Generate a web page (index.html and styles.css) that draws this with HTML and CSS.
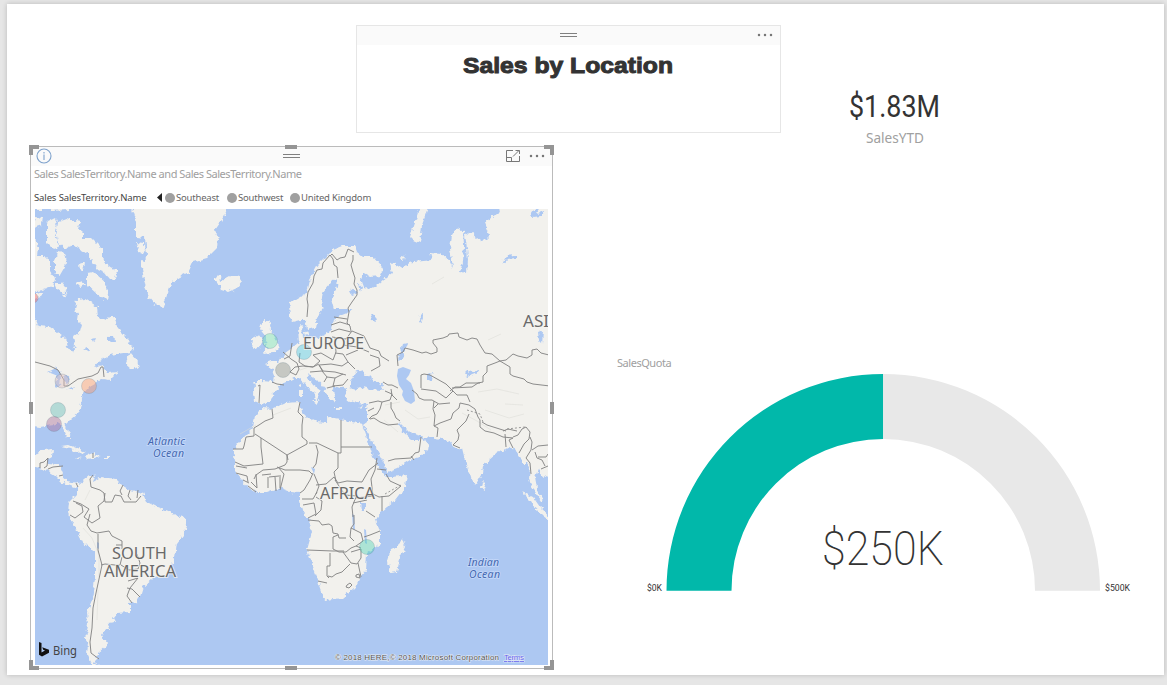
FILE: index.html
```html
<!DOCTYPE html>
<html lang="en">
<head>
<meta charset="utf-8">
<title>Sales by Location</title>
<link rel="stylesheet" href="styles.css">
</head>
<body>
<main class="sheet">
  <div class="col-left">
    <section class="textbox">
      <header class="bar">
        <svg class="grip" width="17" height="6" viewBox="0 0 17 6"><path d="M0 1.5h17M0 4.5h17"/></svg>
        <svg class="dots" width="16" height="4" viewBox="0 0 16 4"><circle cx="2" cy="2" r="1.25"/><circle cx="8" cy="2" r="1.25"/><circle cx="14" cy="2" r="1.25"/></svg>
      </header>
      <svg class="heading" width="423" height="40" viewBox="0 0 423 40"><text x="106" y="28" textLength="210" lengthAdjust="spacingAndGlyphs">Sales by Location</text></svg>
    </section>

    <section class="mapbox">
      <i class="h tl"></i><i class="h tm"></i><i class="h tr"></i><i class="h ml"></i><i class="h mr"></i><i class="h bl"></i><i class="h bm"></i><i class="h br"></i>
      <header class="bar">
        <svg class="info" width="16" height="16" viewBox="0 0 16 16"><circle cx="8" cy="8" r="7"/><path d="M8 6.5v5.5M8 4v1.4"/></svg>
        <svg class="grip" width="17" height="6" viewBox="0 0 17 6"><path d="M0 1.5h17M0 4.5h17"/></svg>
        <svg class="focus" width="16" height="14" viewBox="0 0 16 14"><path d="M8 1.5H1.500V12.500H14.500V7M1.500 8.500H6.500V12.500M8 7.500L14 1.500M10.500 1.500H14.500V5"/></svg>
        <svg class="dots" width="16" height="4" viewBox="0 0 16 4"><circle cx="2" cy="2" r="1.25"/><circle cx="8" cy="2" r="1.25"/><circle cx="14" cy="2" r="1.25"/></svg>
      </header>
      <h2 class="viz-title">Sales SalesTerritory.Name and Sales SalesTerritory.Name</h2>
      <div class="legend">
        <span class="legend-name">Sales SalesTerritory.Name</span>
        <svg class="prev" width="5" height="9" viewBox="0 0 5 9"><path d="M5 0v9L0 4.500z"/></svg>
        <span class="key k1"><b></b>Southeast</span>
        <span class="key k2"><b></b>Southwest</span>
        <span class="key k3"><b></b>United Kingdom</span>
      </div>
      <svg class="map" width="513" height="456" viewBox="35 209 513 456">
        <defs>
          <filter id="coast" filterUnits="userSpaceOnUse" x="20" y="195" width="545" height="485" color-interpolation-filters="sRGB">
            <feTurbulence type="fractalNoise" baseFrequency=".22" numOctaves="2" seed="4" result="n"/>
            <feDisplacementMap in="SourceGraphic" in2="n" scale="6" xChannelSelector="R" yChannelSelector="G"/>
          </filter>
        </defs>
        <rect class="sea" x="35" y="209" width="514" height="456"/>
        <g filter="url(#coast)">
          <g class="land">
            <path d="M131 200L132 209 136 222 136 237 145 238 147 255 142 268 145 285 148 297 153 303 163 307 167 295 172 282 180 277 188 273 193 262 207 258 217 248 218 238 215 230 220 223 226 212 228 200z"/>
            <path d="M136 243l8 1 1 7-5 3zM141 260l5 2-1 7-4-3z"/>
            <path d="M215 277l5-2 1 6 9-5h8l4 6-5 6-9 4-7-2-1-5-5-3z"/>
            <path d="M58 222l9-3 13 3-2 6 5 4v6h9l10 10v7l3 8 12 9-2 6-5 1-5-6-7-3-6-8-4-7-8-5-7-5-8 3-7-6-2-10z"/>
            <path d="M87 273l6-1 14 13 1 8-1 7-10-6-10-9zM47 222l8-4 2 5-2 9 2 10 3 5-7 1-6-6zM35 217l8 1-1 7-9 3zM50 200h20v10l-20 1zM30 200h14v10H30z"/>
            <path d="M57 252l8 1 2 10-7 12-5-3v-10zM30 238h5l3 10-1 9h8l5 3v10l5 8-2 9-10 3-13 2zM55 283h7l5 7-4 3-6-5zM79 264l6-2-1 6-4 2zM76 283l7-2 3 4-6 2zM62 295l4-2 1 4-4 1zM34 294l9-1-1 4-8 2z"/>
            <path d="M28 318H35L38 326 50 327 65 338 68 347 73 353 75 345 73 337 80 332 82 325 77 320 78 313 75 308 77 300 85 299 90 302 97 307 98 318 107 320 110 315 115 318 117 328 127 338 133 348 130 352 110 355 100 361 95 367 102 364 107 373 118 372 110 380 102 379 95 384 88 388 83 394 81 404 79 412 70 420 65 425 69 432 71 438 67 438 63 428 60 422 53 425 46 426 40 427 28 425z"/>
            <path d="M125 363l5-11 7 8 2 7-7 2z"/>
            <path d="M28 460l15-10 10-1-1 8-5 3 1 4 12 1 3 7-1 5 5 4 11 2-1 5-14-5-8-8-8-5-19-5zM61 446l7-1 17 7-8 1-7-5zM85 456l8-3 8 4-14 2zM104 457h4v2h-4zM76 457l5 1-4 1z"/>
            <path d="M78 485L90 475 95 476 93 482 100 478 117 480 123 486 130 490 143 493 147 502 157 507 170 512 185 518 187 525 183 535 177 543 175 558 170 570 165 577 153 578 143 587 140 597 137 602 130 603 130 612 117 613 113 618 115 622 108 623 110 630 105 630 102 635 107 645 98 653 98 657 93 662 102 668 92 665 87 655 88 642 85 638 88 625 87 612 92 600 95 578 95 552 83 543 78 533 70 517 68 512 69 502 78 493z"/>
            <path d="M290 318L289 305 295 300 307 293 310 280 318 265 328 255 333 250 343 246 355 246 357 252 363 257 373 257 380 265 383 270 380 276 370 277 363 273 361 279 364 287 371 288 376 286 383 280 392 273 390 263 395 262 397 268 413 262 432 260 430 252 440 253 450 262 453 268 450 248 452 235 457 227 463 230 464 245 463 262 460 272 467 273 468 260 467 248 465 235 470 232 477 238 483 242 490 235 485 222 500 212 498 200H560V482L547 477 540 475 539 467 535 477 537 488 543 501 541 501 533 490 529 478 530 467 527 463 522 463 520 457 515 450 510 447 503 450 495 455 483 465 482 475 476 485 470 477 465 460 462 448 455 449 448 440 435 438 425 437 417 435 410 433 402 425 399 422 403 432 412 440 420 440 422 438 429 443 428 450 420 457 410 460 397 468 387 472 385 465 377 450 370 437 363 425 367 422 367 410 368 404 357 403 347 400 345 395 347 389 338 386 333 389 335 403 330 400 327 392 323 387 317 380 310 375 307 372 308 378 313 385 321 391 319 395 316 402 315 394 308 388 303 382 298 378 294 378 288 381 280 385 275 393 268 402 262 404 258 402 254 401 253 393 255 385 254 381 262 381 273 382 274 375 272 369 265 364 270 362 277 362 285 353 292 348 299 342 298 328 302 325 303 337 310 338 320 337 330 332 332 325 337 317 347 313 353 309 345 309 335 309 332 298 337 287 338 278 332 280 323 292 321 302 323 310 317 318 315 328 308 330 306 320 300 320 292 322z"/>
            <path d="M263 320l7 2-1 5 3 5 6 11 2 5-8 5-9 1 5-6-3-5 2-6-7-9zM252 338l6-3 4 5-3 7-8 2zM304 332l4-1 1 4-4 1z"/>
            <path d="M262 408L272 409 285 403 300 402 302 412 308 418 317 422 327 423 328 417 340 419 353 422 362 424 367 438 373 457 379 467 386 477 392 477 407 475 405 487 395 500 380 513 376 520 380 532 380 543 367 553 366 570 360 577 355 588 343 598 325 600 322 592 315 572 307 550 312 532 308 518 302 510 300 502 300 493 290 492 280 488 267 493 257 493 248 487 235 472 235 463 233 450 243 438 253 428 255 415z"/>
            <path d="M402 538l3 9-5 11-3 14-7 1-2-11 2-12 7-3zM522 492l11 5 7 10 15 14v4l-17-13-7-11zM482 481l3 3-1 6-3-2zM422 200h9l-9 25-2 18-7-3-3-3 5-15zM312 400h7l-2 4zM299 390h3v7h-3zM299 384l2-1v5l-2-1zM336 407h7v2h-7zM358 407l5-2-3 4zM402 255l3 1-1 4-4-2z"/>
          </g>
          <g class="lake">
            <path d="M350 388v-8l6-8 7-2 3 6 6-2-2 5 13 6-2 5-11-1-8-2-6 3z"/>
            <path d="M427 374l6-1-2 7-4 1zM465 374l5-5 2 3 8-2v2l-13 5zM538 332l5-2-1 14-3-3z"/>
            <path d="M48 372l8-4 6 5-4 3zM56 377l4-2-1 13-4-1zM63 375l6 1 1 7-5 1zM67 389l8-3-3 4z"/>
            <path d="M360 503h6v7h-5zM350 291l4-3 3 5-5 2zM358 283l4 3-2 7zM370 315l5 1 2 5-5-1zM334 262l4 8M398 360l5-16 4-1-5 16zM419 322l3-9 2 1-3 9zM502 265l4-9 10-1v3l-9 1zM530 212l10-4-3 5 8-2-4 5-9 1zM108 337l6-1 1 5-7 1zM92 339l4-1-2 5zM84 349l4-2 1 5z"/>
          </g>
        </g>
        <path class="lake" d="M398 369l5-2 8 3-2 5-3 4 5 4 3 8 1 10-4 3-6-3-3-6 1-4-4-6-2-9zM311 467l4 2-1 5zM352 514l2 1 1 15-2-1zM364 529l2 1 1 14-2-1zM97 542l2 1v6l-2-1z"/>
        <g class="relief"><path d="M83 528l9 10 7 17v22M405 410l13 9 12-2M462 413l15 8 14 9M478 392l19-3 22 5M505 404l18 1M240 434l16-9M273 415l18-7M384 420l14 12M85 500l5-10M432 284l12-7M300 370l9-3M98 590l-1 30M485 410l24 8 15-4M385 405l15-3M488 340l13-6"/></g>
        <g class="border">
          <path d="M307 317l1-12-1-6 1-7 5-9 1-7 3-6 5-1 1-6 7-8 3 4 1 6 3 2 1 11M330 256l2-2 5 6 3-2 5-1 3-8 6 3M353 255v5l-2 5 2 7 2 6-1 6 3 6v5l-5 7-4 6 1 4-2 11 3 3 1 5M334 317l13 2M331 325l9-3 10 3M331 332l8-3 12 3M352 331l-6 8-14-2M352 331l12 5 6 12 9 3 2 5 8 5M343 345l14 2 12 5M335 338l1 14-3 8M333 360l-12-7-8 2 7 6-7 6-8-1-6-4 1-9M292 343l-2 13-6 3M283 352l8 7 6 4 2 6-3 6M296 375l-6-3 5-5 8-1 10 1 6-3M319 365l12-1 11 2 6-4-5-8-8-1M319 365l4 6 12 1 11 3M310 372l12-1 5 6-3 5M327 377l8 1 8-4M335 378l-2 8 10-1 5-6M323 372l-4-7M335 386l-8 2M348 362l7 7M346 355l12-5M258 386l2-1-1 18M272 382l5 2 7 1M370 355l9 3 1 8-9 5"/>
          <path d="M398 366l-1-11 6-3 2-4 8 2 9 3 4-1 5 2 6-2v-4l-4-5v-3l10-2 5-2 1-2 9-1 1 4 8 3 5-2 5 1 3 6 5 8 7 1 8 7 6-1 7-6 5 2 9 2 5-3v-5l5-1 4 4 8 2M500 361l10 6v7l3 2 11 3 3 3 6 2 17 2M500 361l-5 2-8 3v6l-4 4v6l-5 1-6 4-20 1M421 388v-13l3-1 6 1 16 9 4 4 3 3-7 7-10-7-15-2M412 390l5 4 2 4 5 2 8 0 7 4 11-1M434 408l4-4M434 401l-1 8 2 6-1 11 4 2-1 9M434 426l6-3 11-4 2-6 6-5 1-5 9 2M450 391l5-4 5 0 6-4 14 0M451 389l6 6 10 0 3 7M383 382l5 3 4 0 6 3M391 389l1 6 5 5M385 391l7 3M369 403l9-2 4 1 8-2 2-6M382 402l-2 7-3 5-5 2-3 3M391 402v6l3 5 2 5 4 3M370 419l4-1 6 4 8 3 10-1M388 461l7-2 16-1 4-5 4-1 2-15M368 411l6-3M411 456l3 4"/>
          <path d="M469 405l6 4 3 8 2 3v7l5 4 9 2 9 4 10 1M482 422l5 3 19 6M503 431l5-2 9 2M505 434l1 13M513 438l-4 2 4 8M513 437l5-2 4-6 4-2 4 5-1 7-5 5-5 9M530 437l2 5-1 8-5 8 4 5 1 11M532 450l6-4 10-1M535 452l2 6 5 2 3 6M538 457l8 0 2-3M541 469l7-3M469 414l-3 7-9 9 2 5-1 5-5 5 7 3"/>
          <path d="M272 409l1 9-8 3-6 4-5 3v8l-8 1-2 9-1 3-10 0M255 434l32 21 1 5M261 438l0 9 2 17-19 2-9-4M300 402l-2 10 5 5-1 8 0 12 5 4 0 3-20 11v7l-2 3-10 4-12 1-7 5-2 4M341 420v33M341 453h-3v15l-4 4 2 9M309 443l8 0 21 10M341 447h31M316 445l2 7-2 12-3 4M277 467l8 3 15 0 9 1 3 3M278 467l6 7-4 16M262 475l9-1M268 477v11M279 476l-10 1M275 477l1 14M280 475v13M256 474l1 14-6-6M236 473l11 3 1 6M236 466l11 2M243 480l6 3M248 486l8 6M313 473l-3 7-6 10-4 3M316 485l10-1 8-7 4 6 9-2 15 1 7-12 9-7M314 474l5 12-3 8M335 480l10 15 12 1M377 458l-2 12-4 9M377 469l9 1M371 479l2 17-17 2M386 474l4 7 11 5-12 10-10 1-6-3M382 496v15M356 497l-4 10 1 10M353 503l14-3M366 511l9 6M302 499l11 0 4-7M303 505l11-2 2 11-8 4M316 497l6 4-1 9-6 6M308 520l11 1 3 4 7-1 3 2 1 7 5 1 1 4 7 0M338 535l-5 2v12l6 3 7 0 5-4 5-2M307 550l26 1 11 0M330 553v13h-3v10l2 2M327 583l-9-2M328 576l4 1 4-3 6-2 8-8M343 552l8 11 6 1 4-6 0-9-10 3M354 515v9l-3 4 6 3 4 2 2 8M364 537l6-2 10-4M351 528l-1 9 4 4M358 563l3 14M363 541l-7 5 5 2M347 585l3-2 2 2-3 3-3-1zM356 575l3-1 1 4-4-1z"/>
          <path d="M93 475l-3 4 1 8 9 3 4 3 1 9 7 0 3-7 6 1 3 6 12 0 5-6M123 485l-3 6 2 4M130 490l-2 6 3 4M138 490l-1 8M105 493l-1 8-6 5 2 12-8 5-8-6 5-8-8-5-8-3M76 503l6 3 1 6-8 6-5-3M90 514l-3 11 4 6 6 2 12-2 3 5 10 5v8M98 534v16l4 15-3 14-3 14-3 15-1 20-2 14 1 11 8 6M101 565l4-1 10 1 5 0 2-8M122 545l-6 0M121 565l8 5 9-1 2-6-3-9M138 578l-10 3M138 578l-8 10-3 8 5 7M127 588l5 1 8 8M35 362l15 4 8 4 6 10v6l4 0 10-7 14-3 6-3 3-6 2 0 1 10M40 468v-5l4-1 4-4M48 458l-1 8-3 2M48 469l5-2 10-1M59 476l4-1M76 483l2 4M93 453v5"/>
        </g>
        <path class="dash" d="M385 494l16-9M507 429l18-2M467 410l13 4 3 8"/>
        <g class="pins">
          <circle cx="33" cy="298" r="5" fill="#fd625e"/>
          <circle cx="62" cy="381" r="7" fill="#dfbfbf"/>
          <circle cx="89" cy="386" r="7.500" fill="#fe9666"/>
          <circle cx="58" cy="410" r="7.500" fill="#5fb9b8"/>
          <circle cx="54" cy="424" r="7.500" fill="#a66999"/>
          <circle cx="270" cy="341" r="7.500" fill="#73e4b4"/>
          <circle cx="304" cy="352" r="7.500" fill="#4bc8e6"/>
          <circle cx="283" cy="370" r="7.500" fill="#8b908a"/>
          <circle cx="367" cy="547" r="7.500" fill="#4cd2b4"/>
        </g>
        <g class="place">
          <text x="303" y="349" textLength="61" lengthAdjust="spacingAndGlyphs">EUROPE</text>
          <text x="523" y="327" textLength="37" lengthAdjust="spacingAndGlyphs">ASIA</text>
          <text x="320" y="499" textLength="55" lengthAdjust="spacingAndGlyphs">AFRICA</text>
          <text x="112" y="559" textLength="55" lengthAdjust="spacingAndGlyphs">SOUTH</text>
          <text x="104" y="577" textLength="72" lengthAdjust="spacingAndGlyphs">AMERICA</text>
        </g>
        <g class="ocean">
          <text x="148" y="445" textLength="37">Atlantic</text><text x="153" y="457" textLength="31">Ocean</text>
          <text x="468" y="566" textLength="31">Indian</text><text x="469" y="578" textLength="31">Ocean</text>
        </g>
        <path class="bing" d="M39 642l2.500 1v9.500l3.500-2-1.800-.8-1-2.400 6.800 2.400v3L42 656.500 39 654.800z"/>
        <text class="bing-name" x="53" y="655" textLength="24" lengthAdjust="spacingAndGlyphs">Bing</text>
        <g class="credit"><text x="335" y="660" textLength="164">© 2018 HERE,© 2018 Microsoft Corporation</text><text class="terms" x="504" y="660" textLength="20">Terms</text></g>
      </svg>
    </section>
  </div>

  <div class="col-right">
    <section class="card">
      <svg width="160" height="38" viewBox="0 0 160 38"><text class="card-value" x="33" y="31" textLength="91" lengthAdjust="spacingAndGlyphs">$1.83M</text></svg>
      <svg width="160" height="24" viewBox="0 0 160 24"><text class="card-label" x="50" y="19" textLength="58" lengthAdjust="spacingAndGlyphs">SalesYTD</text></svg>
    </section>
    <section class="gauge">
      <h2 class="viz-title quota">SalesQuota</h2>
      <svg width="530" height="230" viewBox="610 370 530 230">
        <path fill="#01b8aa" d="M666.500 590.700A216.700 216.700 0 0 1 883.200 374V439A151.700 151.700 0 0 0 731.500 590.700z"/>
        <path fill="#e8e8e8" d="M883.200 374A216.700 216.700 0 0 1 1100 590.700H1035A151.700 151.700 0 0 0 883.200 439z"/>
        <text class="gauge-value" x="822" y="565" textLength="122" lengthAdjust="spacingAndGlyphs">$250K</text>
        <text class="tick" x="647" y="591" textLength="15" lengthAdjust="spacingAndGlyphs">$0K</text>
        <text class="tick" x="1105" y="591" textLength="25" lengthAdjust="spacingAndGlyphs">$500K</text>
      </svg>
    </section>
  </div>
</main>
</body>
</html>
```
FILE: styles.css
```css
* { box-sizing: border-box; }
body {
  margin: 0;
  height: 685px;
  padding: 4px 3px 10px 7px;
  overflow: hidden;
  background: #e6e6e6;
  font-family: "Noto Sans", "Open Sans", sans-serif;
}
svg { display: block; flex: none; }
.sheet {
  display: flex;
  height: 671px;
  background: #fff;
  box-shadow: 0 0 5px rgba(0, 0, 0, .2);
}
.col-left { width: 774px; padding: 21px 0 0 23px; }
.textbox { width: 425px; height: 108px; margin-left: auto; border: 1px solid #e6e6e6; }
.bar { display: flex; align-items: center; height: 19px; padding-bottom: 1px; background: #fafafa; }
.grip { fill: none; stroke: #808080; stroke-width: 1; }
.dots { fill: #777; }
.textbox .grip { margin-left: 203px; }
.textbox .dots { margin-left: auto; margin-right: 7px; }
.heading text {
  font: bold 22.500px "Liberation Sans", Arial, sans-serif;
  fill: #333;
  stroke: #333;
  stroke-width: 1;
}

.mapbox {
  position: relative;
  width: 523px;
  height: 523px;
  margin-top: 13px;
  border: 1px solid #bbb;
}
.mapbox .bar { padding-bottom: 2px; }
.h { position: absolute; width: 10px; height: 10px; border: 0 solid #959595; }
.tl { left: -2px; top: -2px; border-width: 4px 0 0 4px; }
.tr { right: -2px; top: -2px; border-width: 4px 4px 0 0; }
.bl { left: -2px; bottom: -2px; border-width: 0 0 4px 4px; }
.br { right: -2px; bottom: -2px; border-width: 0 4px 4px 0; }
.tm, .bm { left: 254px; width: 12px; height: 4px; background: #959595; }
.tm { top: -2px; }
.bm { bottom: -2px; }
.ml, .mr { top: 255px; width: 4px; height: 12px; background: #959595; }
.ml { left: -2px; }
.mr { right: -2px; }
.info { margin-left: 5px; fill: none; stroke: #7ea2cc; stroke-width: 1.100; }
.mapbox .grip { margin-left: 231px; }
.focus { margin-left: 205px; fill: none; stroke: #777; }
.mapbox .dots { margin-left: 8px; }
.viz-title {
  margin: 0;
  font-size: 11px;
  line-height: 15px;
  font-weight: 400;
  letter-spacing: -.46px;
  color: #a0a0a0;
  white-space: nowrap;
}
.mapbox .viz-title { padding-left: 3px; }
.legend {
  display: flex;
  align-items: center;
  height: 13px;
  margin-top: 10px;
  padding-left: 3px;
  font-size: 9.500px;
  letter-spacing: -.2px;
  line-height: 13px;
  color: #666;
  white-space: nowrap;
}
.legend-name { width: 123px; color: #444; letter-spacing: -.12px; }
.prev { fill: #222; }
.key { display: flex; align-items: center; gap: 1px; }
.key b { width: 10px; height: 10px; border-radius: 50%; background: #a0a0a0; }
.k1 { width: 62px; margin-left: 3px; }
.k2 { width: 63px; }
.map { margin: 5px 0 0 4px; }
.sea { fill: #adc8f2; }
.land { fill: #f2f1ed; }
.lake { fill: #adc8f2; }
.relief { fill: none; stroke: #dddcd8; stroke-width: .8; opacity: .7; }
.border { fill: none; stroke: #868686; stroke-width: .95; stroke-linejoin: round; }
.dash { fill: none; stroke: #858585; stroke-width: .8; stroke-dasharray: 2 2; }
.pins circle { fill-opacity: .42; stroke: #67808b; stroke-opacity: .25; }
.place text {
  font-size: 17px;
  fill: #6a6a6a;
  stroke: #f5f4f1;
  stroke-width: 2px;
  stroke-opacity: .7;
  paint-order: stroke;
}
.ocean text {
  font-size: 10.500px;
  font-style: italic;
  fill: #4468b0;
  stroke: #c7dafa;
  stroke-width: 1.500px;
  paint-order: stroke;
}
.bing { fill: #111; }
.bing-name { font-size: 13px; fill: #444; }
.credit text {
  font: 8px "Liberation Sans", Arial, sans-serif;
  fill: #555;
  stroke: #e8edf5;
  stroke-width: 1px;
  paint-order: stroke;
}
.credit .terms { fill: #6262ef; text-decoration: underline; }

.col-right { flex: 1; padding-top: 82px; }
.card { display: flex; flex-direction: column; width: 160px; margin-left: 35px; }
.card-value { font: 32px Roboto, sans-serif; fill: #333; }
.card-label { font-size: 14px; fill: #a0a0a0; }
.gauge { margin-top: 207px; margin-left: -171px; }
.quota { padding-left: 7px; }
.gauge-value { font: 200 49px Roboto, sans-serif; fill: #333; }
.tick { font: 9px Roboto, sans-serif; fill: #333; }
```
